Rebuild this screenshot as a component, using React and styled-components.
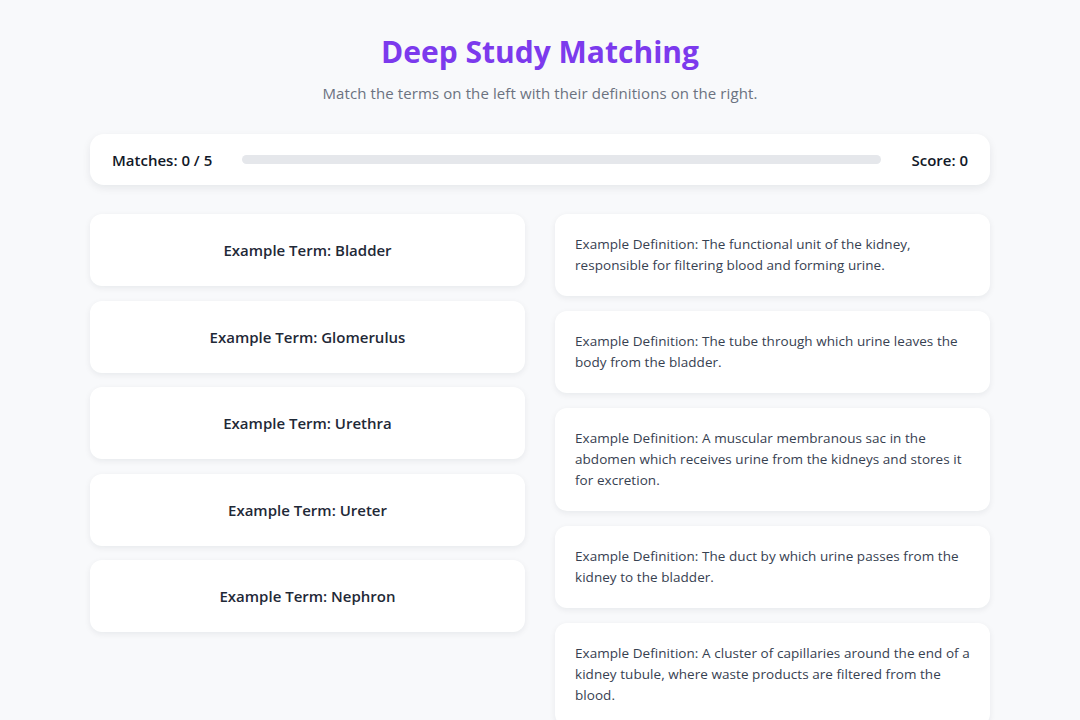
import React from 'react';
import styled, { createGlobalStyle } from 'styled-components';

const GlobalStyle = createGlobalStyle`
  html, body {
    margin: 0;
    padding: 0;
    background: #f8f9fb;
    font-family: "Open Sans", "Noto Sans", sans-serif;
  }
  * { box-sizing: border-box; }
`;

const Page = styled.div`
  width: 900px;
  margin: 0 auto;
  padding-top: 34px;
`;

const Header = styled.header`
  text-align: center;
`;

const Title = styled.h1`
  margin: 0;
  font-size: 30px;
  line-height: 36px;
  font-weight: 700;
  color: #7c3aed;
`;

const Subtitle = styled.p`
  margin: 12px 0 0;
  font-size: 15px;
  line-height: 22px;
  letter-spacing: 0.1px;
  color: #6b7280;
`;

const StatsBar = styled.div`
  margin-top: 30px;
  height: 51px;
  display: flex;
  align-items: center;
  gap: 30px;
  padding: 0 22px;
  background: #fff;
  border-radius: 14px;
  box-shadow: 0 3px 8px rgba(15, 23, 42, 0.08);
`;

const Stat = styled.span`
  font-size: 15px;
  font-weight: 600;
  color: #111827;
  white-space: nowrap;
`;

const Track = styled.div`
  flex: 1;
  height: 9px;
  border-radius: 5px;
  background: #e5e7eb;
  overflow: hidden;
`;

const Fill = styled.div`
  height: 100%;
  background: #7c3aed;
`;

const Board = styled.div`
  margin-top: 29px;
  display: grid;
  grid-template-columns: 1fr 1fr;
  gap: 30px;
  align-items: start;
`;

const Column = styled.div`
  display: flex;
  flex-direction: column;
  gap: ${p => p.$gap}px;
`;

const Card = styled.div`
  background: #fff;
  border-radius: 12px;
  box-shadow: 0 2px 6px rgba(15, 23, 42, 0.07);
`;

const TermCard = styled(Card)`
  height: 72px;
  display: flex;
  align-items: center;
  justify-content: center;
  font-size: 15px;
  font-weight: 600;
  color: #1f2937;
`;

const DefCard = styled(Card)`
  padding: 20px;
  font-size: 13.5px;
  line-height: 21px;
  letter-spacing: 0.05px;
  color: #374151;
`;

const terms = ['Bladder', 'Glomerulus', 'Urethra', 'Ureter', 'Nephron'];

const definitions = [
  'The functional unit of the kidney, responsible for filtering blood and forming urine.',
  'The tube through which urine leaves the body from the bladder.',
  'A muscular membranous sac in the abdomen which receives urine from the kidneys and stores it for excretion.',
  'The duct by which urine passes from the kidney to the bladder.',
  'A cluster of capillaries around the end of a kidney tubule, where waste products are filtered from the blood.'
];

const App = () => {
  const matches = 0;
  return (
    <>
      <GlobalStyle />
      <Page>
        <Header>
          <Title>Deep Study Matching</Title>
          <Subtitle>Match the terms on the left with their definitions on the right.</Subtitle>
        </Header>
        <StatsBar>
          <Stat>Matches: {matches} / {terms.length}</Stat>
          <Track>
            <Fill style={{ width: `${(matches / terms.length) * 100}%` }} />
          </Track>
          <Stat>Score: 0</Stat>
        </StatsBar>
        <Board>
          <Column $gap={14.5}>
            {terms.map(t => (
              <TermCard key={t}>Example Term: {t}</TermCard>
            ))}
          </Column>
          <Column $gap={15}>
            {definitions.map(d => (
              <DefCard key={d}>Example Definition: {d}</DefCard>
            ))}
          </Column>
        </Board>
      </Page>
    </>
  );
};

export default App;
